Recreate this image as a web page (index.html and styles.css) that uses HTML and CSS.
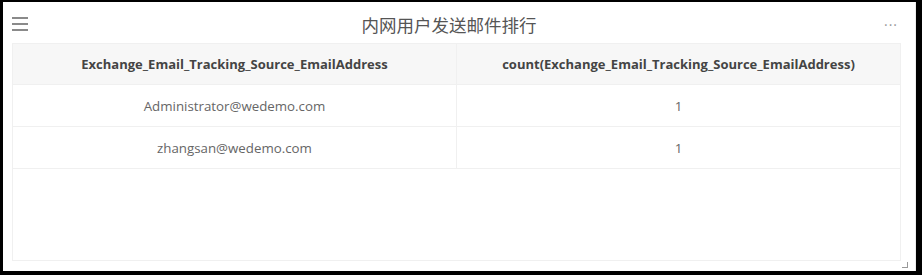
FILE: index.html
```html
<!DOCTYPE html>
<html>
<head>
<meta charset="utf-8">
<link rel="stylesheet" href="styles.css">
</head>
<body>
<div class="panel">
  <div class="head">
    <span class="menu"><i></i><i></i><i></i></span>
    <div class="title">内网用户发送邮件排行</div>
    <span class="more">···</span>
  </div>
  <div class="tablewrap">
    <div class="row hdr">
      <div class="cell">Exchange_Email_Tracking_Source_EmailAddress</div>
      <div class="cell">count(Exchange_Email_Tracking_Source_EmailAddress)</div>
    </div>
    <div class="row">
      <div class="cell">Administrator@wedemo.com</div>
      <div class="cell">1</div>
    </div>
    <div class="row">
      <div class="cell">zhangsan@wedemo.com</div>
      <div class="cell">1</div>
    </div>
  </div>
  <span class="handle"></span>
</div>
</body>
</html>
```
FILE: styles.css
```css
html, body { margin: 0; padding: 0; }
body {
  background: #000;
  width: 922px;
  height: 275px;
  overflow: hidden;
  font-family: "Open Sans", "Noto Sans CJK SC", sans-serif;
}
.panel {
  position: relative;
  margin: 2px 6px 0 3px;
  height: 269px;
  background: #fff;
  box-sizing: border-box;
  padding: 0 14px 10px 9px;
  display: flex;
  flex-direction: column;
  border-right: 1px solid #ececec;
}
.head {
  height: 41px;
  box-sizing: border-box;
  padding-top: 3px;
  display: flex;
  align-items: center;
  position: relative;
}
.menu {
  display: flex;
  flex-direction: column;
  gap: 4px;
  width: 16px;
  margin-top: -1px;
}
.menu i {
  display: block;
  height: 2px;
  background: #8a8a8a;
}
.title {
  flex: 1;
  text-align: center;
  font-size: 17.5px;
  color: #555;
  font-family: "Noto Sans CJK SC", sans-serif;
  margin-right: 14px;
}
.more {
  color: #999;
  font-size: 14px;
  letter-spacing: 1px;
  margin-right: 3px;
}
.tablewrap {
  flex: 1;
  border: 1px solid #f0f0f0;
  display: flex;
  flex-direction: column;
}
.row {
  display: flex;
  height: 42px;
  border-bottom: 1px solid #f0f0f0;
  box-sizing: border-box;
}
.row.hdr {
  background: #f7f7f7;
  height: 41px;
}
.cell {
  flex: 1;
  display: flex;
  align-items: center;
  justify-content: center;
  font-size: 13.3px;
  color: #666;
  padding-top: 1px;
}
.cell + .cell { border-left: 1px solid #f0f0f0; }
.hdr .cell { font-weight: 700; color: #444; font-size: 13px; padding-top: 0; }
.handle {
  position: absolute;
  right: 7px;
  bottom: 3px;
  width: 5px;
  height: 5px;
  border-right: 1.5px solid #999;
  border-bottom: 1.5px solid #999;
}
```
